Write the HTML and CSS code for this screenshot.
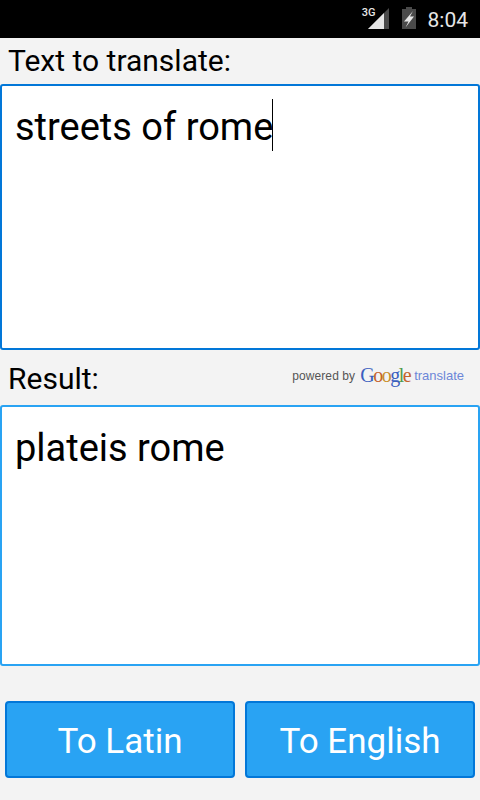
FILE: index.html
```html
<!DOCTYPE html>
<html lang="en">
<head>
    <meta charset="UTF-8">
    <meta name="viewport" content="width=device-width, initial-scale=1.0">
    <title>Latin Translator</title>
    <link rel="stylesheet" href="styles.css">
</head>
<body>
    <div class="status-bar">
        <span class="net-label">3G</span>
        <svg class="signal-icon" width="21" height="21" viewBox="0 0 21 21">
            <polygon points="0,21 21,0 21,21" fill="#4a4a4a"/>
            <polygon points="0,21 16,5 16,21" fill="#e6e6e6"/>
        </svg>
        <svg class="battery-icon" width="14" height="22" viewBox="0 0 14 22">
            <rect x="4" y="0" width="6" height="3" fill="#4a4a4a"/>
            <rect x="0" y="2" width="14" height="20" fill="#4a4a4a"/>
            <polygon points="11,4 2,14.500 6.500,14.500 3.500,20.500 12,9.500 8,9.500" fill="#e6e6e6"/>
        </svg>
        <span class="clock">8:04</span>
    </div>

    <div class="label-row first-label">
        <span class="label">Text to translate:</span>
    </div>
    <div class="text-box input-box">
        <span class="box-text">streets of rome</span><span class="caret"></span>
    </div>

    <div class="label-row result-label">
        <span class="label">Result:</span>
        <span class="powered">
            <span class="powered-by">powered by</span>
            <span class="google"><span class="g-blue">G</span><span class="g-red">o</span><span class="g-yellow">o</span><span class="g-blue">g</span><span class="g-green">l</span><span class="g-red">e</span></span>
            <span class="powered-translate">translate</span>
        </span>
    </div>
    <div class="text-box output-box">
        <span class="box-text">plateis rome</span>
    </div>

    <div class="buttons">
        <button class="action-button">To Latin</button>
        <button class="action-button">To English</button>
    </div>
</body>
</html>
```

FILE: styles.css
```css
body {
    margin: 0;
    width: 480px;
    height: 800px;
    overflow: hidden;
    background-color: #f3f3f3;
    font-family: Roboto, sans-serif;
    color: #000;
}

.status-bar {
    display: flex;
    align-items: center;
    justify-content: flex-end;
    height: 38px;
    padding-right: 12px;
    box-sizing: border-box;
    background-color: #000;
    color: #e6e6e6;
}

.net-label {
    align-self: flex-start;
    margin-top: 6px;
    margin-right: -8px;
    font-size: 11px;
    font-weight: 500;
}

.signal-icon {
    margin-top: -1px;
    margin-right: 13px;
}

.battery-icon {
    margin-top: -2px;
    margin-right: 12px;
}

.clock {
    font-size: 21px;
    margin-top: 2px;
}

.label-row {
    display: flex;
    align-items: center;
    justify-content: space-between;
    padding-left: 8px;
}

.first-label {
    height: 46px;
    padding-bottom: 2px;
    box-sizing: border-box;
}

.result-label {
    height: 55px;
    padding-right: 16px;
}

.result-label .label {
    margin-top: 2px;
}

.label {
    font-size: 30px;
}

.text-box {
    position: relative;
    box-sizing: border-box;
    background: #fff;
    border-radius: 3px;
    border: 2px solid #0277d8;
    padding: 13px 13px;
    font-size: 38px;
    line-height: 56px;
}

.input-box {
    height: 266px;
}

.output-box {
    height: 261px;
    border-color: #29a3f3;
}

.caret {
    display: inline-block;
    width: 1px;
    height: 52px;
    margin-left: -1px;
    background: #000;
    vertical-align: -11px;
}

.powered {
    display: flex;
    align-items: center;
    margin-bottom: 4px;
    font-family: "Liberation Sans", sans-serif;
}

.powered-by {
    margin-right: 5px;
    font-size: 12px;
    letter-spacing: 0.1px;
    color: #555;
}

.google {
    margin-right: 4px;
    font-family: "Liberation Serif", serif;
    font-size: 20px;
    letter-spacing: -1.5px;
}

.g-blue { color: #3b5fc0; }
.g-red { color: #c4622d; }
.g-yellow { color: #c98f2c; }
.g-green { color: #4f9a4a; }

.powered-translate {
    font-size: 13px;
    color: #6c86d8;
}

.buttons {
    display: flex;
    gap: 10px;
    padding: 35px 5px 0;
}

.action-button {
    flex: 1;
    height: 77px;
    padding: 4px 0 0;
    border: 2px solid #0277d8;
    border-radius: 4px;
    background: #29a3f3;
    color: #fff;
    font-family: Roboto, sans-serif;
    font-size: 35px;
}
```
